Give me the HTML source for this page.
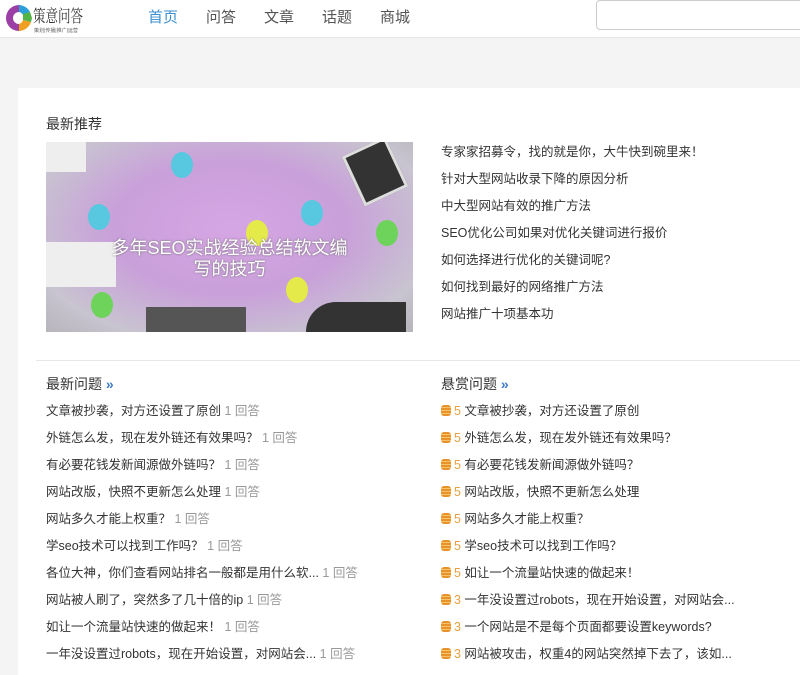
<!DOCTYPE html>
<html><head><meta charset="utf-8"><style>
*{margin:0;padding:0;box-sizing:border-box}
html,body{width:800px;height:675px;overflow:hidden}
body{background:#f4f4f4;font-family:"Liberation Sans","Noto Sans CJK SC",sans-serif;color:#333;position:relative}
.hd{position:absolute;left:0;top:0;width:800px;height:38px;background:#fff;border-bottom:1px solid #e6e6e6}
.logo{position:absolute;left:4px;top:2px}
.nav a{position:absolute;top:6px;font-size:15px;color:#555;text-decoration:none}
.search{position:absolute;left:596px;top:0;width:210px;height:30px;border:1px solid #ccc;border-radius:4px;background:#fff}
.card{position:absolute;left:18px;top:88px;width:782px;height:587px;background:#fff}
.t{position:absolute;font-size:14px;color:#333}
.li{position:absolute;font-size:12.5px;color:#333;white-space:nowrap}
.g{color:#999}
.o{color:#e8a040}
.raq{color:#3b7ac9;font-weight:bold}
.coin{display:inline-block;width:10px;height:11px;vertical-align:-1px;margin-right:3px;background:repeating-linear-gradient(#e8922a 0 2px,#f6c36a 2px 3px);border-radius:3px}
.img{position:absolute;left:46px;top:142px;width:367px;height:190px;background:radial-gradient(ellipse at 50% 45%,#d6a6e4 0,#c9a0da 45%,#c8c4d0 80%,#b8b4bb 100%);overflow:hidden}
.cap{position:absolute;left:0;width:367px;top:96px;text-align:center;color:#fff;font-size:18px;line-height:21px;text-shadow:0 0 2px #666}
.bulb{position:absolute;width:22px;height:26px;border-radius:50%}
</style></head><body>
<div class="hd">
<svg class="logo" width="84" height="32" viewBox="0 0 84 32">
<path d="M15 3 A13 13 0 1 0 15 29 L15 22 A6 6 0 1 1 15 10Z" fill="#9b3fa6"/>
<path d="M15 3 A13 13 0 0 1 26 10 L19 13 A6 6 0 0 0 15 10Z" fill="#2aa0d8"/>
<path d="M15 29 A13 13 0 0 0 27 20 L19 18 A6 6 0 0 1 15 22Z" fill="#f0a020"/>
<path d="M19 12 L26 10 L28 16 L27 20 L19 18Z" fill="#52b447"/>
<text x="29" y="20" font-size="17" textLength="50" lengthAdjust="spacingAndGlyphs" font-family="Noto Serif CJK SC,serif" fill="#333">策意问答</text>
<text x="30" y="30" font-size="5" fill="#666">策划|传播|推广|运营</text>
</svg>
<div class="nav"><a style="left:148px;color:#3b8fd0">首页</a><a style="left:206px">问答</a><a style="left:264px">文章</a><a style="left:322px">话题</a><a style="left:380px">商城</a></div>
<div class="search"></div>
</div>
<div class="card"></div>
<div class="t" style="left:46px;top:114px">最新推荐</div>
<div class="img">
<div class="bulb" style="left:42px;top:62px;background:#57c8e0"></div>
<div class="bulb" style="left:125px;top:10px;background:#57c8e0"></div>
<div class="bulb" style="left:200px;top:78px;background:#e4ea4a"></div>
<div class="bulb" style="left:255px;top:58px;background:#57c8e0"></div>
<div class="bulb" style="left:330px;top:78px;background:#6ed35a"></div>
<div class="bulb" style="left:45px;top:150px;background:#6ed35a"></div>
<div class="bulb" style="left:240px;top:135px;background:#e4ea4a"></div>
<div style="position:absolute;left:0;top:0;width:40px;height:30px;background:#eee"></div>
<div style="position:absolute;left:305px;top:2px;width:48px;height:55px;background:#333;border:3px solid #ddd;transform:rotate(-25deg)"></div>
<div style="position:absolute;left:0;top:100px;width:70px;height:45px;background:#eee"></div>
<div style="position:absolute;left:260px;top:160px;width:100px;height:30px;background:#333;border-radius:40px 0 0 0"></div>
<div style="position:absolute;left:100px;top:165px;width:100px;height:25px;background:#555"></div>
<div class="cap">多年SEO实战经验总结软文编<br>写的技巧</div>
</div>
<div class="li" style="left:441px;top:141px">专家家招募令，找的就是你，大牛快到碗里来！</div>
<div class="li" style="left:441px;top:168px">针对大型网站收录下降的原因分析</div>
<div class="li" style="left:441px;top:195px">中大型网站有效的推广方法</div>
<div class="li" style="left:441px;top:222px">SEO优化公司如果对优化关键词进行报价</div>
<div class="li" style="left:441px;top:249px">如何选择进行优化的关键词呢?</div>
<div class="li" style="left:441px;top:276px">如何找到最好的网络推广方法</div>
<div class="li" style="left:441px;top:303px">网站推广十项基本功</div>
<div style="position:absolute;left:36px;top:360px;width:764px;height:1px;background:#e8e8e8"></div>
<div class="t" style="left:46px;top:374px">最新问题 <span class="raq">»</span></div>
<div class="t" style="left:441px;top:374px">悬赏问题 <span class="raq">»</span></div>
<div class="li" style="left:46px;top:400px">文章被抄袭，对方还设置了原创 <span class="g">1 回答</span></div>
<div class="li" style="left:46px;top:427px">外链怎么发，现在发外链还有效果吗？ <span class="g">1 回答</span></div>
<div class="li" style="left:46px;top:454px">有必要花钱发新闻源做外链吗？ <span class="g">1 回答</span></div>
<div class="li" style="left:46px;top:481px">网站改版，快照不更新怎么处理 <span class="g">1 回答</span></div>
<div class="li" style="left:46px;top:508px">网站多久才能上权重？ <span class="g">1 回答</span></div>
<div class="li" style="left:46px;top:535px">学seo技术可以找到工作吗？ <span class="g">1 回答</span></div>
<div class="li" style="left:46px;top:562px">各位大神，你们查看网站排名一般都是用什么软... <span class="g">1 回答</span></div>
<div class="li" style="left:46px;top:589px">网站被人刷了，突然多了几十倍的ip <span class="g">1 回答</span></div>
<div class="li" style="left:46px;top:616px">如让一个流量站快速的做起来！ <span class="g">1 回答</span></div>
<div class="li" style="left:46px;top:643px">一年没设置过robots，现在开始设置，对网站会... <span class="g">1 回答</span></div>
<div class="li" style="left:441px;top:400px"><i class="coin"></i><span class="o">5</span> 文章被抄袭，对方还设置了原创</div>
<div class="li" style="left:441px;top:427px"><i class="coin"></i><span class="o">5</span> 外链怎么发，现在发外链还有效果吗？</div>
<div class="li" style="left:441px;top:454px"><i class="coin"></i><span class="o">5</span> 有必要花钱发新闻源做外链吗？</div>
<div class="li" style="left:441px;top:481px"><i class="coin"></i><span class="o">5</span> 网站改版，快照不更新怎么处理</div>
<div class="li" style="left:441px;top:508px"><i class="coin"></i><span class="o">5</span> 网站多久才能上权重？</div>
<div class="li" style="left:441px;top:535px"><i class="coin"></i><span class="o">5</span> 学seo技术可以找到工作吗？</div>
<div class="li" style="left:441px;top:562px"><i class="coin"></i><span class="o">5</span> 如让一个流量站快速的做起来！</div>
<div class="li" style="left:441px;top:589px"><i class="coin"></i><span class="o">3</span> 一年没设置过robots，现在开始设置，对网站会...</div>
<div class="li" style="left:441px;top:616px"><i class="coin"></i><span class="o">3</span> 一个网站是不是每个页面都要设置keywords?</div>
<div class="li" style="left:441px;top:643px"><i class="coin"></i><span class="o">3</span> 网站被攻击，权重4的网站突然掉下去了，该如...</div>
</body></html>
